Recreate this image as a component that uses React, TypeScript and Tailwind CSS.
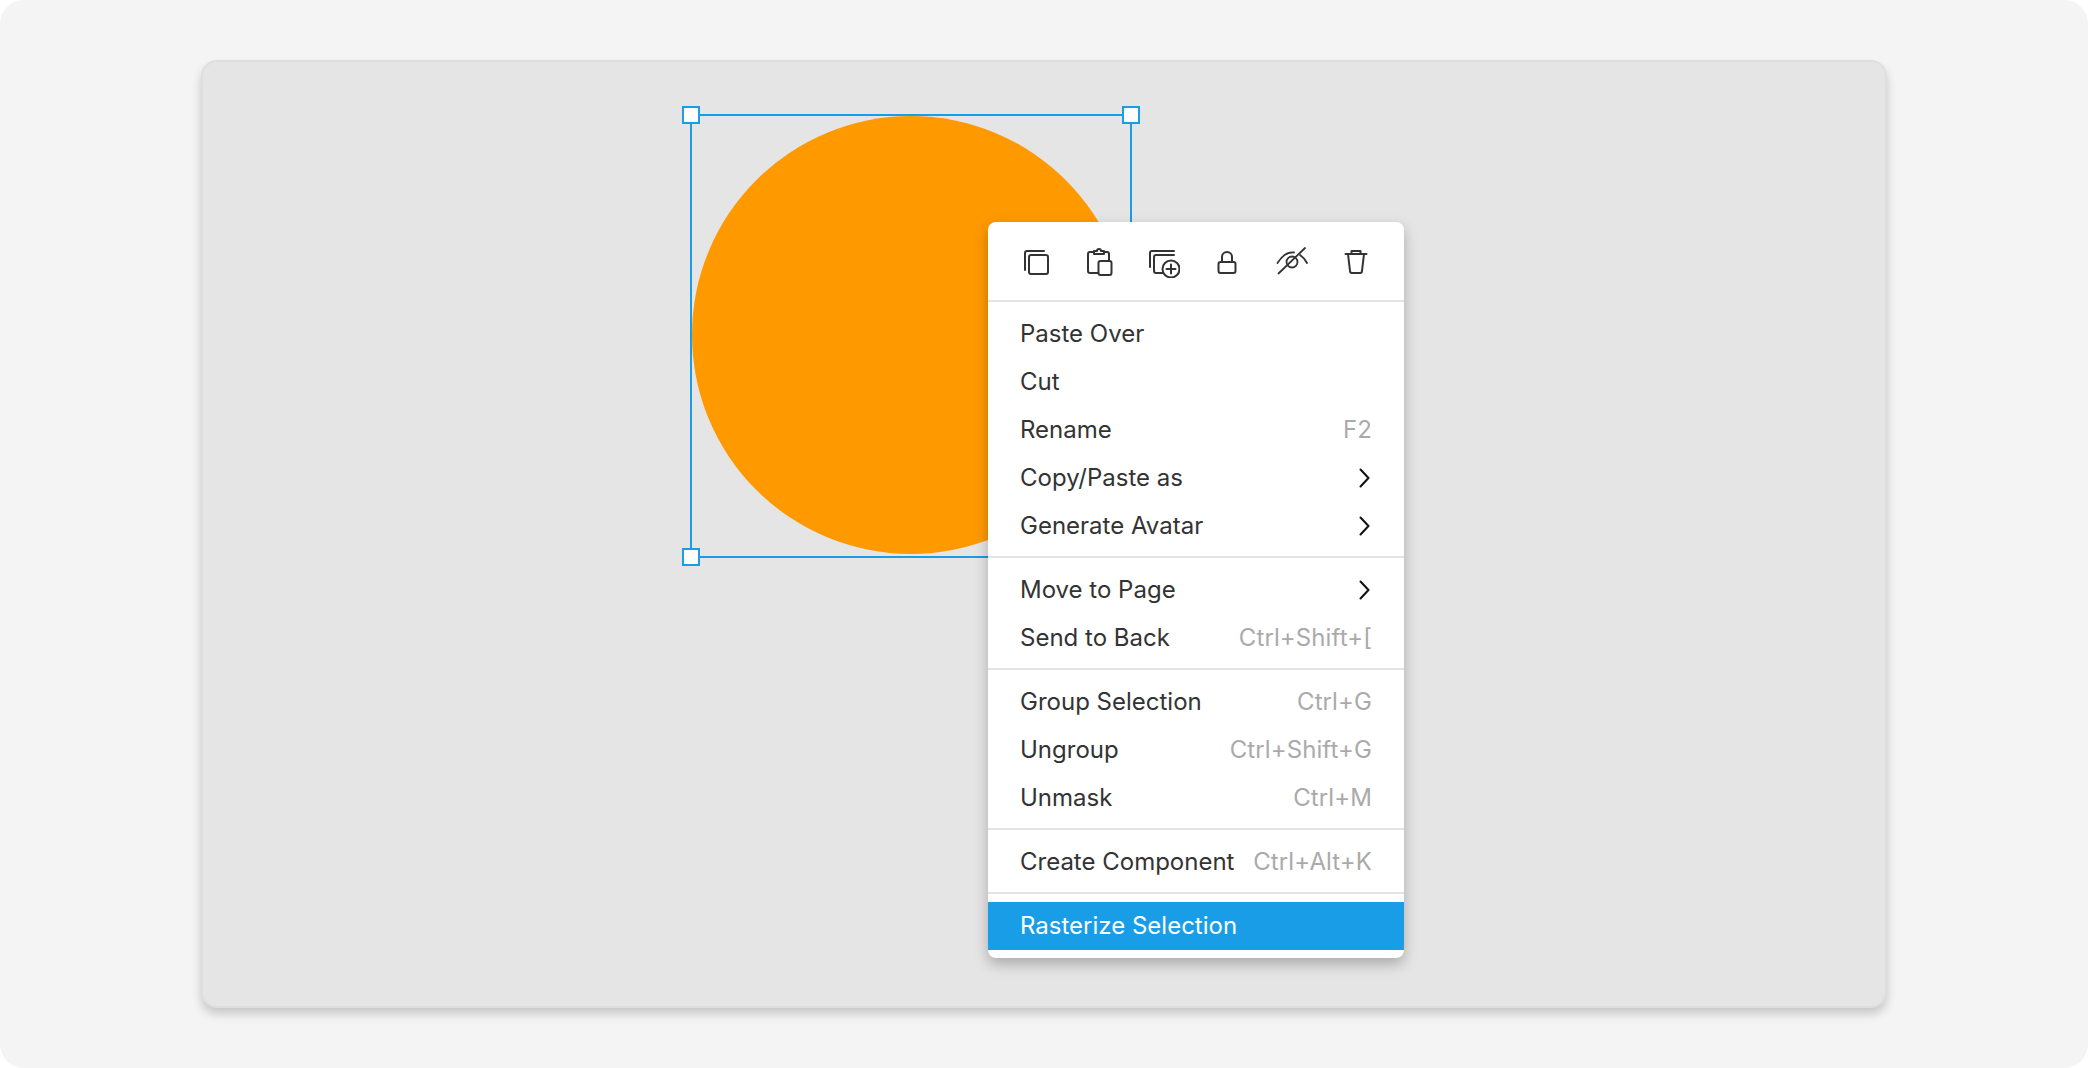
const Item = ({ label, hint, sub, active }: { label: string; hint?: string; sub?: boolean; active?: boolean }) => (
  <div className={`flex h-12 items-center justify-between pl-8 pr-8 text-[24px] ${active ? "bg-[#189de6] text-white" : "text-[#333333]"}`}>
    <span>{label}</span>
    {hint && <span className="tracking-[0.1px] text-[#aaaaaa]">{hint}</span>}
    {sub && (
      <svg width="24" height="24" viewBox="0 0 24 24" fill="none" stroke="#111111" strokeWidth="2" strokeLinecap="round" strokeLinejoin="round">
        <path d="M12.5 3.5 L20.5 12 L12.5 20.5" />
      </svg>
    )}
  </div>
);

const Divider = () => <div className="h-[2px] bg-[#e4e4e4]" />;

const Icon = ({ children }: { children: React.ReactNode }) => (
  <svg width="32" height="32" viewBox="0 0 32 32" fill="none" stroke="#333333" strokeWidth="2" strokeLinecap="round" strokeLinejoin="round">
    {children}
  </svg>
);

const Handle = ({ pos }: { pos: string }) => (
  <div className={`absolute h-[18px] w-[18px] border-2 border-[#189de6] bg-white ${pos}`} />
);

export default function App() {
  return (
    <div className="h-[1068px] w-full rounded-[24px] bg-[#f4f4f4] pl-[201px] pt-[60px] font-['Inter',sans-serif]">
      <div className="relative h-[948px] w-[1686px] rounded-[16px] border-2 border-[#dedede] bg-[#e5e5e5] shadow-[0_6px_10px_rgba(0,0,0,0.18)]">
        <div className="absolute left-[487px] top-[52px] h-[444px] w-[442px] border-2 border-[#189de6]">
          <div className="h-[438px] w-[438px] rounded-full bg-[#ff9900]" />
          <Handle pos="-left-[10px] -top-[10px]" />
          <Handle pos="-right-[10px] -top-[10px]" />
          <Handle pos="-left-[10px] -bottom-[10px]" />
        </div>
        <div className="absolute left-[785px] top-[160px] w-[416px] rounded-[8px] bg-white pb-2 shadow-[0_6px_14px_rgba(0,0,0,0.26)]">
          <div className="flex h-[78px] items-center justify-between px-8 pt-[2px]">
            <Icon>
              <rect x="9" y="9" width="19" height="19" rx="2" />
              <path d="M24 5 H7 a2 2 0 0 0 -2 2 V24" />
            </Icon>
            <Icon>
              <path d="M10 6 H6 a2 2 0 0 0 -2 2 V25 a2 2 0 0 0 2 2 H14" />
              <path d="M20 6 H23 a2 2 0 0 1 2 2 V15" />
              <path d="M10 8 V5 H13 a2 2 0 0 1 4 0 H20 V8 Z" />
              <rect x="14.5" y="15" width="13" height="14" rx="2" />
            </Icon>
            <Icon>
              <path d="M26 5 H4 a2 2 0 0 0 -2 2 V21" />
              <path d="M26 9 H8 a2 2 0 0 0 -2 2 V25 a2 2 0 0 0 2 2 H16" />
              <circle cx="23" cy="23" r="8.5" fill="white" />
              <path d="M23 18.5 V27.5 M18.5 23 H27.5" />
            </Icon>
            <Icon>
              <rect x="6.5" y="16" width="17" height="11" rx="2" />
              <path d="M10 16 V11 a5 5 0 0 1 10 0 V16" />
            </Icon>
            <Icon>
              <path d="M1.5 17 C7 8 12 6 18 6.5 M24 9 C27 11 29.5 14 31 17" strokeWidth="1.8" />
              <circle cx="16" cy="16" r="5.5" strokeWidth="1.8" />
              <path d="M2.5 27.5 L29 2" strokeWidth="1.8" />
            </Icon>
            <Icon>
              <path d="M5.5 8 H26.5" />
              <path d="M11.5 8 V5 H20.5 V8" />
              <path d="M8 8 L10 25 a2 2 0 0 0 2 2 H20 a2 2 0 0 0 2 -2 L24 8" />
            </Icon>
          </div>
          <Divider />
          <div className="pb-[6px] pt-2">
            <Item label="Paste Over" />
            <Item label="Cut" />
            <Item label="Rename" hint="F2" />
            <Item label="Copy/Paste as" sub />
            <Item label="Generate Avatar" sub />
          </div>
          <Divider />
          <div className="pb-[6px] pt-2">
            <Item label="Move to Page" sub />
            <Item label="Send to Back" hint="Ctrl+Shift+[" />
          </div>
          <Divider />
          <div className="pb-[6px] pt-2">
            <Item label="Group Selection" hint="Ctrl+G" />
            <Item label="Ungroup" hint="Ctrl+Shift+G" />
            <Item label="Unmask" hint="Ctrl+M" />
          </div>
          <Divider />
          <div className="pb-[6px] pt-2">
            <Item label="Create Component" hint="Ctrl+Alt+K" />
          </div>
          <Divider />
          <div className="pt-2">
            <Item label="Rasterize Selection" active />
          </div>
        </div>
      </div>
    </div>
  );
}
